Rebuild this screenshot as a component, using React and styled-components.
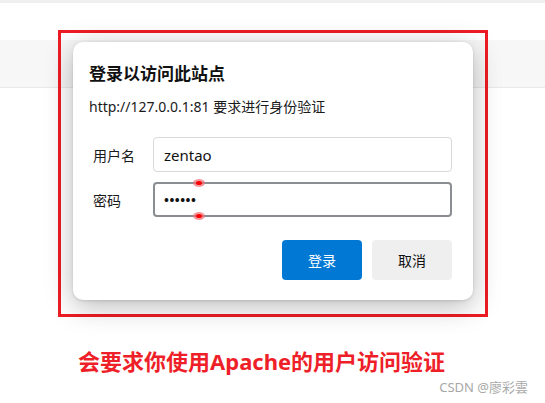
import React from "react";
import styled, { createGlobalStyle } from "styled-components";

const GlobalStyle = createGlobalStyle`
  html, body {
    margin: 0;
    padding: 0;
  }
  body {
    width: 545px;
    height: 403px;
    overflow: hidden;
    font-family: "Noto Sans", "Noto Sans CJK SC", sans-serif;
    background: linear-gradient(
      to bottom,
      #efefef 0 3px,
      #ffffff 3px 40px,
      #f7f7f7 40px 87px,
      #e9e9e9 87px 88px,
      #ffffff 88px
    );
  }
`;

const Page = styled.div`
  display: flex;
  flex-direction: column;
  padding-top: 30px;
`;

const Frame = styled.div`
  margin-left: 58px;
  width: 400px;
  border: 3px solid #ed1c24;
  padding: 9px 12px 14px 12px;
`;

const Dialog = styled.div`
  width: 400px;
  height: 258px;
  box-sizing: border-box;
  background: #fff;
  border-radius: 10px;
  box-shadow: 0 6px 28px rgba(0, 0, 0, 0.28), 0 1px 3px rgba(0, 0, 0, 0.12);
  padding: 20px 21px 20px 16px;
  display: flex;
  flex-direction: column;
`;

const Title = styled.div`
  font-size: 17px;
  line-height: 24px;
  font-weight: 700;
  color: #111;
`;

const Subtitle = styled.div`
  margin-top: 11px;
  font-size: 14px;
  line-height: 20px;
  color: #1a1a1a;
`;

const Form = styled.div`
  margin-top: 20px;
  padding-left: 4px;
  display: flex;
  flex-direction: column;
  gap: 10px;
`;

const Row = styled.div`
  display: flex;
  align-items: center;
`;

const Label = styled.div`
  width: 60px;
  font-size: 14px;
  color: #1a1a1a;
`;

const Field = styled.div`
  position: relative;
  flex: 1;
  height: 35px;
  box-sizing: border-box;
  border: ${(p) => (p.$focused ? "2px solid #8a8e93" : "1px solid #d9d9d9")};
  border-radius: 4px;
  padding-left: ${(p) => (p.$focused ? "9px" : "10px")};
  display: flex;
  align-items: center;
  font-size: 15px;
  color: #111;
`;

const Dots = styled.span`
  font-size: 13px;
  letter-spacing: 0.5px;
  font-weight: 700;
`;

const Marker = styled.span`
  position: absolute;
  left: 38px;
  ${(p) => (p.$bottom ? "bottom: -5px;" : "top: -5px;")}
  width: 12px;
  height: 8px;
  border-radius: 50%;
  background: rgba(240, 110, 120, 0.7);
  &::after {
    content: "";
    position: absolute;
    left: 3px;
    top: 2px;
    width: 6px;
    height: 4px;
    border-radius: 50%;
    background: #ff0000;
  }
`;

const Actions = styled.div`
  margin-top: 23px;
  display: flex;
  justify-content: flex-end;
  gap: 10px;
`;

const Button = styled.div`
  width: 80px;
  height: 40px;
  border-radius: 4px;
  display: flex;
  align-items: center;
  justify-content: center;
  font-size: 14px;
  background: ${(p) => (p.$primary ? "#0078d4" : "#efefef")};
  color: ${(p) => (p.$primary ? "#fff" : "#111")};
`;

const Caption = styled.div`
  margin-top: 29px;
  padding-left: 78px;
  font-size: 22px;
  line-height: 30px;
  font-weight: 700;
  color: #ee1f29;
`;

const Watermark = styled.div`
  margin-top: 2px;
  padding-right: 17px;
  text-align: right;
  font-size: 13px;
  line-height: 18px;
  color: #a8a8a8;
`;

export default function App() {
  return (
    <>
      <GlobalStyle />
      <Page>
        <Frame>
          <Dialog>
            <Title>登录以访问此站点</Title>
            <Subtitle>http://127.0.0.1:81 要求进行身份验证</Subtitle>
            <Form>
              <Row>
                <Label>用户名</Label>
                <Field>zentao</Field>
              </Row>
              <Row>
                <Label>密码</Label>
                <Field $focused>
                  <Dots>••••••</Dots>
                  <Marker />
                  <Marker $bottom />
                </Field>
              </Row>
            </Form>
            <Actions>
              <Button $primary>登录</Button>
              <Button>取消</Button>
            </Actions>
          </Dialog>
        </Frame>
        <Caption>会要求你使用Apache的用户访问验证</Caption>
        <Watermark>CSDN @廖彩雲</Watermark>
      </Page>
    </>
  );
}
